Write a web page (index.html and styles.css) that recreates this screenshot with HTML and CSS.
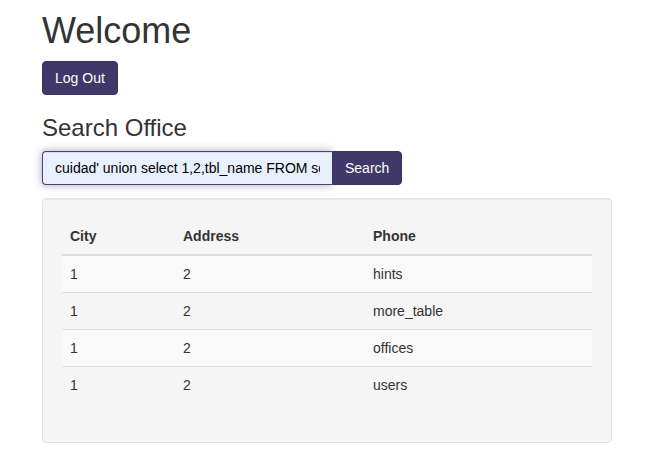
FILE: index.html
```html
<!DOCTYPE html>
<html lang="en">
<head>
<meta charset="utf-8">
<title>Welcome</title>
<link rel="stylesheet" href="styles.css">
</head>
<body>
<div class="page">
  <h1 class="title">Welcome</h1>
  <div class="logout-row"><button class="btn" type="button">Log Out</button></div>
  <h3 class="subtitle">Search Office</h3>
  <form class="search" onsubmit="return false">
    <input class="search-input" type="text" value="cuidad' union select 1,2,tbl_name FROM sqlite_master WHERE type='table'--">
    <button class="btn btn-attached" type="submit">Search</button>
  </form>
  <div class="well">
    <table class="table">
      <colgroup>
        <col class="c-city">
        <col class="c-addr">
        <col class="c-phone">
      </colgroup>
      <thead>
        <tr><th>City</th><th>Address</th><th>Phone</th></tr>
      </thead>
      <tbody>
        <tr><td>1</td><td>2</td><td>hints</td></tr>
        <tr><td>1</td><td>2</td><td>more_table</td></tr>
        <tr><td>1</td><td>2</td><td>offices</td></tr>
        <tr><td>1</td><td>2</td><td>users</td></tr>
      </tbody>
    </table>
  </div>
</div>
</body>
</html>
```

FILE: styles.css
```css
* { box-sizing: border-box; }
html, body { margin: 0; padding: 0; background: #fff; }
body {
  font-family: "Liberation Sans", Arial, Helvetica, sans-serif;
  font-size: 14px;
  line-height: 20px;
  color: #333;
}
.page {
  width: 612px;
  padding-left: 42px;
  padding-top: 11px;
}
.title {
  margin: 0 0 10px;
  font-size: 36px;
  line-height: 40px;
  font-weight: 500;
  color: #333;
}
.logout-row { display: flex; }
.btn {
  font-family: inherit;
  font-size: 14px;
  line-height: 20px;
  color: #fff;
  background: #3f3868;
  border: 1px solid #3a3362;
  border-radius: 4px;
  padding: 6px 12px;
  height: 34px;
  cursor: pointer;
}
.subtitle {
  margin: 20px 0 10px;
  font-size: 24px;
  line-height: 26px;
  font-weight: 500;
  color: #333;
}
.search {
  display: flex;
  margin: 0 0 13px;
}
.search-input {
  width: 290px;
  height: 34px;
  padding: 6px 12px;
  font-family: inherit;
  font-size: 14px;
  line-height: 20px;
  color: #000;
  background: #e8f0fe;
  border: 1px solid #4a4470;
  border-right: 0;
  border-radius: 4px 0 0 4px;
  box-shadow: inset 0 1px 1px rgba(0,0,0,.075), 0 0 8px rgba(63,56,104,.45);
  outline: none;
}
.btn-attached {
  border-radius: 0 4px 4px 0;
  width: 70px;
}
.well {
  width: 570px;
  background: #f5f5f5;
  border: 1px solid #e3e3e3;
  border-radius: 4px;
  padding: 19px;
  box-shadow: inset 0 1px 1px rgba(0,0,0,.05);
}
.table {
  width: 100%;
  border-collapse: collapse;
  border-spacing: 0;
  margin-bottom: 20px;
  table-layout: fixed;
}
.c-city { width: 113px; }
.c-addr { width: 190px; }
.c-phone { width: 227px; }
.table th, .table td {
  padding: 8px;
  text-align: left;
  vertical-align: top;
  line-height: 20px;
}
.table th {
  font-weight: bold;
  border-bottom: 2px solid #ddd;
}
.table td { border-top: 1px solid #ddd; }
.table tbody tr:first-child td { border-top: 0; }
.table tbody tr:nth-child(odd) { background: #f9f9f9; }
```
